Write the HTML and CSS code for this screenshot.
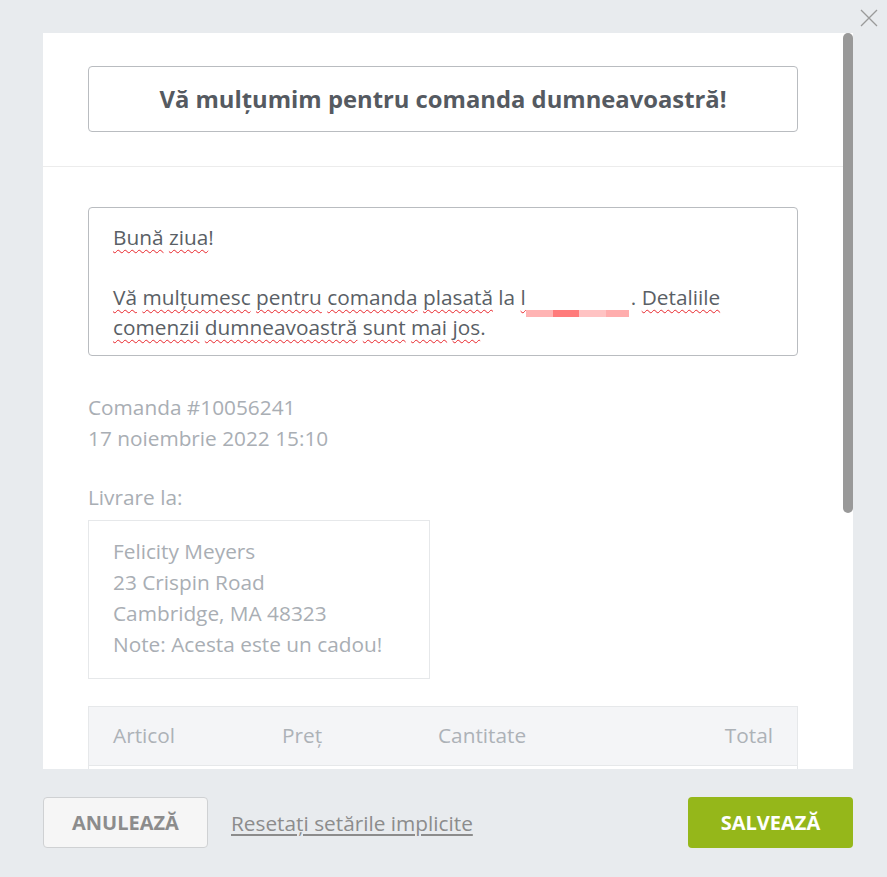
FILE: index.html
```html
<!DOCTYPE html>
<html lang="ro">
<head>
    <meta charset="UTF-8">
    <meta name="viewport" content="width=device-width, initial-scale=1.0">
    <title>Email de confirmare a comenzii</title>
    <link rel="stylesheet" href="styles.css">
</head>
<body>
    <button class="close" aria-label="Închide">
        <svg width="18" height="18" viewBox="0 0 18 18">
            <path d="M1 1 L17 17 M17 1 L1 17" stroke="#9a9a9a" stroke-width="1.3" fill="none"/>
        </svg>
    </button>

    <div class="page">
        <div class="modal">
            <div class="modal-head">
                <div class="title-box">Vă mulțumim pentru comanda dumneavoastră!</div>
            </div>

            <div class="modal-body">
                <div class="message">
                    <p><span class="sp">Bună</span> <span class="sp">ziua</span>!</p>
                    <p>&nbsp;</p>
                    <p><span class="sp">Vă</span> <span class="sp">mulțumesc</span> <span class="sp">pentru</span> <span class="sp">comanda</span> <span class="sp">plasată</span> la <span class="sp">l<span class="redact"></span></span>. <span class="sp">Detaliile</span>
                    <span class="sp">comenzii</span> <span class="sp">dumneavoastră</span> <span class="sp">sunt</span> <span class="sp">mai</span> <span class="sp">jos</span>.</p>
                </div>

                <div class="order-meta">
                    <p>Comanda #10056241</p>
                    <p>17 noiembrie 2022 15:10</p>
                </div>

                <p class="ship-label">Livrare la:</p>
                <div class="address">
                    <p>Felicity Meyers</p>
                    <p>23 Crispin Road</p>
                    <p>Cambridge, MA 48323</p>
                    <p>Note: Acesta este un cadou!</p>
                </div>

                <div class="items">
                    <div class="items-head">
                        <span>Articol</span>
                        <span>Preț</span>
                        <span>Cantitate</span>
                        <span class="right">Total</span>
                    </div>
                    <!-- item rows are below the visible part of the scroll area -->
                    <div class="items-row"></div>
                </div>
            </div>

            <div class="scroll-thumb"></div>
        </div>

        <div class="footer">
            <button class="btn btn-cancel">Anulează</button>
            <a href="#" class="reset-link">Resetați setările implicite</a>
            <button class="btn btn-save">Salvează</button>
        </div>
    </div>
</body>
</html>
```

FILE: styles.css
```css
/* General Reset */
body {
    margin: 0;
    font-family: "Open Sans", "Liberation Sans", sans-serif;
    background-color: #e8ebee;
    color: #5a5f66;
}

p {
    margin: 0;
}

/* Close button */
.close {
    position: absolute;
    top: 9px;
    right: 9px;
    width: 18px;
    height: 18px;
    padding: 0;
    border: none;
    background: none;
    cursor: pointer;
}

.close svg {
    display: block;
}

/* Page Wrapper */
.page {
    padding: 33px 34px 0 43px;
}

/* Modal */
.modal {
    position: relative;
    height: 736px;
    background-color: #ffffff;
    overflow: hidden;
}

.modal-head {
    padding: 33px 55px 34px 45px;
    border-bottom: 1px solid #ececec;
}

.title-box {
    height: 66px;
    box-sizing: border-box;
    border: 1px solid #b9bcc0;
    border-radius: 4px;
    display: flex;
    align-items: center;
    justify-content: center;
    font-size: 23.8px;
    font-weight: bold;
    color: #555a61;
}

.modal-body {
    padding: 40px 55px 40px 45px;
}

/* Message box */
.message {
    height: 149px;
    box-sizing: border-box;
    border: 1px solid #b9bcc0;
    border-radius: 4px;
    padding: 14px 24px;
    font-size: 20.8px;
    line-height: 30px;
    color: #5a5f66;
}

.sp {
    text-decoration: underline wavy #e8262b;
    text-decoration-thickness: 1px;
    text-underline-offset: 4px;
    text-decoration-skip-ink: none;
}

.redact {
    position: relative;
    top: 12px;
    display: inline-block;
    width: 103px;
    height: 7px;
    margin-right: 2px;
    background: linear-gradient(to right, #ffb3b3 0 26%, #ff7b7b 26% 51%, #ffc3c3 51% 78%, #ffadad 78% 100%);
}

/* Order details */
.order-meta {
    margin-top: 36px;
    font-size: 20.8px;
    line-height: 31px;
    color: #a9aeb4;
}

.ship-label {
    margin-top: 28px;
    font-size: 20.8px;
    line-height: 31px;
    color: #a9aeb4;
}

.address {
    width: 342px;
    box-sizing: border-box;
    margin-top: 7px;
    padding: 15px 24px 18px;
    border: 1px solid #e6e8ea;
    font-size: 20.8px;
    line-height: 31px;
    color: #a9aeb4;
}

/* Items table */
.items {
    margin-top: 27px;
    border: 1px solid #e6e8ea;
    font-size: 20.8px;
    color: #adb2b7;
}

.items-head,
.items-row {
    display: grid;
    grid-template-columns: 169px 156px 1fr auto;
    align-items: center;
    height: 59px;
    box-sizing: border-box;
    padding: 0 24px;
}

.items-head {
    padding-bottom: 2px;
    background-color: #f4f5f7;
    border-bottom: 1px solid #e6e8ea;
}

.right {
    text-align: right;
}

.scroll-thumb {
    position: absolute;
    top: 0;
    right: 0;
    width: 10px;
    height: 480px;
    border-radius: 5px;
    background-color: #999999;
}

/* Footer */
.footer {
    display: flex;
    align-items: center;
    padding-top: 28px;
}

.btn {
    width: 165px;
    height: 51px;
    border-radius: 4px;
    font-family: "Open Sans", "Liberation Sans", sans-serif;
    font-size: 20px;
    font-weight: bold;
    text-transform: uppercase;
    cursor: pointer;
}

.btn-cancel {
    background-color: #f6f6f6;
    border: 1px solid #cfd1d3;
    color: #8c8c8c;
}

.reset-link {
    margin-left: 23px;
    font-size: 20.8px;
    color: #8c8c8c;
    text-decoration: underline;
    text-underline-offset: 3px;
}

.btn-save {
    margin-left: auto;
    background-color: #95b71a;
    border: none;
    color: #ffffff;
}
```
